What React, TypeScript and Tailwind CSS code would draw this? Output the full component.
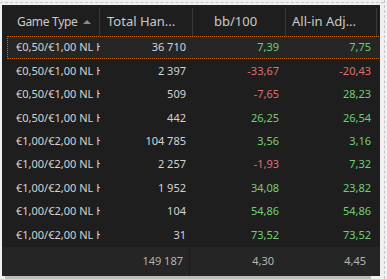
import React from 'react';

type Row = { game: string; hands: string; bb: string; adj: string };

const rows: Row[] = [
  { game: '€0,50/€1,00 NL Hold\'em', hands: '36 710', bb: '7,39', adj: '7,75' },
  { game: '€0,50/€1,00 NL Hold\'em', hands: '2 397', bb: '-33,67', adj: '-20,43' },
  { game: '€0,50/€1,00 NL Hold\'em', hands: '509', bb: '-7,65', adj: '28,23' },
  { game: '€0,50/€1,00 NL Hold\'em', hands: '442', bb: '26,25', adj: '26,54' },
  { game: '€1,00/€2,00 NL Hold\'em', hands: '104 785', bb: '3,56', adj: '3,16' },
  { game: '€1,00/€2,00 NL Hold\'em', hands: '2 257', bb: '-1,93', adj: '7,32' },
  { game: '€1,00/€2,00 NL Hold\'em', hands: '1 952', bb: '34,08', adj: '23,82' },
  { game: '€1,00/€2,00 NL Hold\'em', hands: '104', bb: '54,86', adj: '54,86' },
  { game: '€1,00/€2,00 NL Hold\'em', hands: '31', bb: '73,52', adj: '73,52' },
];

// red for losses, green for wins
const tone = (v: string) => (v.startsWith('-') ? 'text-[#e06f6f]' : 'text-[#72cf72]');

function SortUp() {
  return (
    <svg width="8" height="4" viewBox="0 0 8 4" className="ml-auto mr-[8px] shrink-0">
      <polygon points="0,4 4,0 8,4" fill="#8a8a8a" />
    </svg>
  );
}

export default function App() {
  return (
    <div className="w-[387px] h-[279px] bg-[#f0f0f0] overflow-hidden flex" style={{ fontFamily: '"Noto Sans", "Open Sans", sans-serif' }}>
      <div className="w-[385px] h-full flex flex-col border-r border-dashed border-[#c6c6c6]">
        <div className="h-[2px] shrink-0" />
        <div className="shrink-0 border-t border-dashed border-[#c6c6c6]" />
        <div className="h-[2px] shrink-0" />
        <div className="ml-[2px] w-[378px] h-[271px] shrink-0 bg-[#1e1e1e] flex flex-col overflow-hidden">
          {/* header */}
          <div className="h-[31px] shrink-0 flex items-center pl-[5px] pt-[2px] text-[13px] text-[#cacaca] whitespace-nowrap">
            <div className="w-[93px] h-[28px] flex items-center pl-[10px] border-r border-[#3a3a3a]">
              <span className="text-[12px] tracking-[-0.3px]">Game Type</span>
              <SortUp />
            </div>
            <div className="w-[93px] h-[28px] flex items-center pl-[7px] border-r border-[#3a3a3a]">Total Han...</div>
            <div className="w-[93px] h-[28px] flex items-center pl-[21px] border-r border-[#3a3a3a]">bb/100</div>
            <div className="w-[91px] h-[28px] flex items-center pl-[6px] border-r border-[#3a3a3a]">All-in Adj...</div>
          </div>

          {/* rows */}
          <div className="flex flex-col pl-[5px] text-[11px] text-[#d4d4d4]">
            {rows.map((r, i) => (
              <div
                key={i}
                className={
                  'h-[23.4px] w-[380px] flex items-center ' +
                  (i === 0 ? 'bg-[#262626] border border-dotted border-[#d2660f]' : 'border border-transparent')
                }
              >
                <div className="w-[92px] pl-[8px] whitespace-nowrap overflow-hidden">{r.game}</div>
                <div className="w-[93px] pr-[7px] text-right">{r.hands}</div>
                <div className={'w-[93px] pr-[7px] text-right ' + tone(r.bb)}>{r.bb}</div>
                <div className={'w-[92px] pr-[7px] text-right ' + tone(r.adj)}>{r.adj}</div>
              </div>
            ))}
          </div>

          {/* totals */}
          <div className="flex-1 flex items-center text-[11px] text-[#b4b4b4] bg-[#252525]">
            <div className="w-[188px] h-full flex items-center justify-end pr-[6px] border-r border-[#1c1c1c]">149 187</div>
            <div className="w-[91px] pr-[7px] text-right">4,30</div>
            <div className="w-[92px] pr-[7px] text-right">4,45</div>
          </div>
        </div>
        <div className="ml-[5px] w-[366px] flex-1 bg-[#bdbdbd]" />
      </div>
    </div>
  );
}
